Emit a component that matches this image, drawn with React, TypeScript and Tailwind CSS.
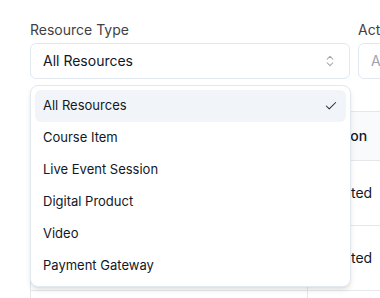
import { Check, ChevronsUpDown } from 'lucide-react'
import React, { useState } from 'react'

const RESOURCE_TYPES = [
  'All Resources',
  'Course Item',
  'Live Event Session',
  'Digital Product',
  'Video',
  'Payment Gateway',
]

const ROWS = [
  { resource: 'Intro to Design', action: 'Started' },
  { resource: 'Weekly Live Q&A', action: 'Started' },
  { resource: 'Starter Kit', action: 'Completed' },
]

const ResourceTypeSelect: React.FC = () => {
  const [value, setValue] = useState('All Resources')

  return (
    <div className="relative w-[320px] shrink-0">
      <label className="mb-[3px] block text-sm leading-5 text-[#3f3f46]">
        Resource Type
      </label>
      <button
        type="button"
        className="flex h-9 w-full items-center justify-between rounded-md border border-[#e2e8f0] bg-white px-3 text-sm text-[#0f172a]"
      >
        <span>{value}</span>
        <ChevronsUpDown size={14} strokeWidth={1.75} className="text-[#9ca3af]" />
      </button>
      {/* open list */}
      <div className="absolute left-0 top-full z-10 mt-1.5 w-[321px] rounded-lg border border-[#e2e8f0] bg-white p-1 shadow-md">
        {RESOURCE_TYPES.map((type) => (
          <div
            key={type}
            onClick={() => setValue(type)}
            className={`flex h-8 items-center justify-between rounded-md pl-2 pr-2 text-[13px] text-[#111827] ${
              type === value ? 'bg-[#f1f5f9]' : ''
            }`}
          >
            <span>{type}</span>
            {type === value && <Check size={14} strokeWidth={1.75} className="text-[#1f2937]" />}
          </div>
        ))}
      </div>
    </div>
  )
}

export default function App() {
  return (
    <div className="h-[298px] w-[380px] overflow-hidden bg-white pl-[30px] pt-5 font-['Inter',sans-serif]">
      <div className="flex gap-2">
        <ResourceTypeSelect />
        <div className="w-[200px] shrink-0">
          <label className="mb-[3px] block text-sm leading-5 text-[#3f3f46]">
            Activity Type
          </label>
          <div className="flex h-9 w-full items-center rounded-md border border-[#e2e8f0] bg-white px-3 text-sm text-[#9ca3af]">
            All Activities
          </div>
        </div>
      </div>

      <div className="mt-8 w-[480px] border-l border-t border-[#e5e7eb]">
        <div className="flex h-[49px] border-b border-[#e5e7eb] bg-[#f9fafb] text-sm font-medium text-[#111827]">
          <div className="flex w-[276px] shrink-0 items-center px-4">Resource</div>
          <div className="flex flex-1 items-center border-l border-[#e5e7eb] px-4">Action</div>
        </div>
        {ROWS.map((row) => (
          <div key={row.resource} className="flex h-[65px] border-b border-[#e5e7eb] text-sm text-[#111827]">
            <div className="flex w-[276px] shrink-0 items-center px-4">{row.resource}</div>
            <div className="flex flex-1 items-center border-l border-[#e5e7eb] px-4">{row.action}</div>
          </div>
        ))}
      </div>
    </div>
  )
}
